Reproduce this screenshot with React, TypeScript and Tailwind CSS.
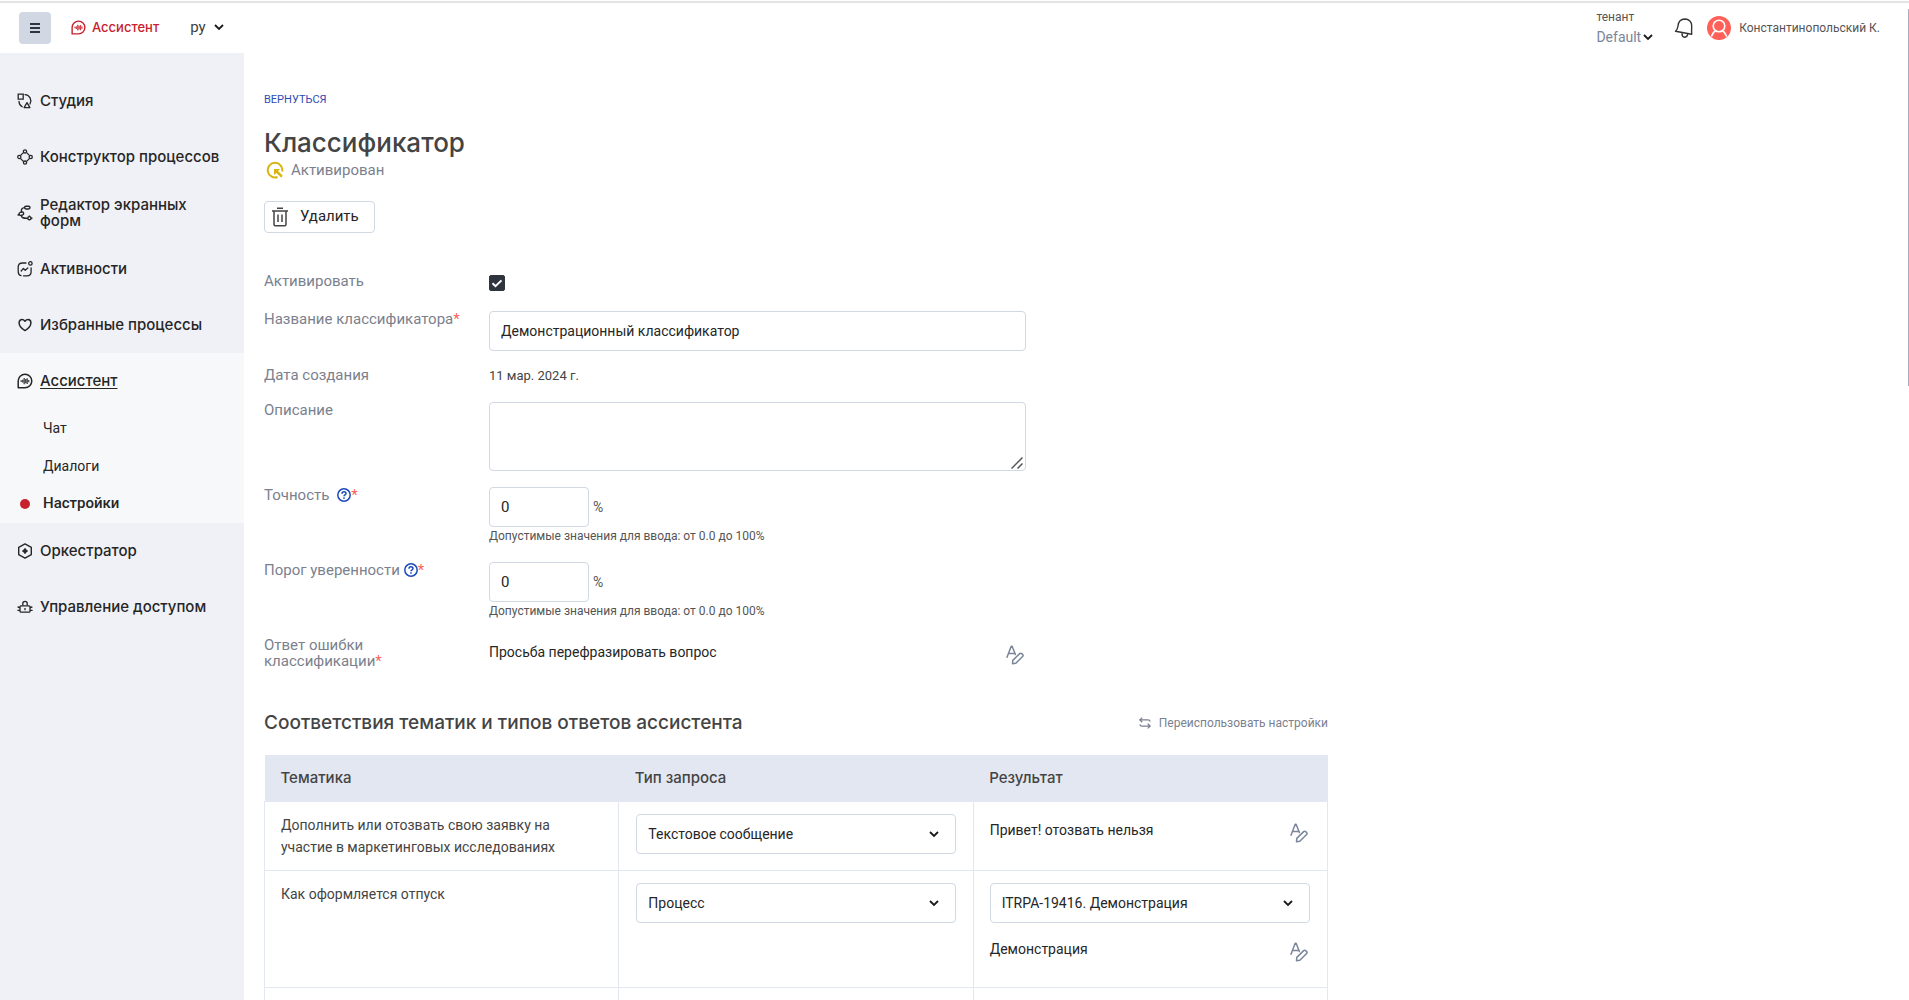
import React, { useState } from "react";
import type { ReactNode } from "react";

/* ---------- Icons ---------- */

type IconProps = { className?: string };

const AssistantIcon = ({ className }: IconProps) => (
  <svg viewBox="0 0 16 16" className={className} fill="none" stroke="currentColor" aria-hidden="true">
    <path d="M1.2 14.8V8a6.8 6.8 0 1 1 6.800 6.800z" strokeWidth="1.500" strokeLinejoin="round" />
    <path d="M4.200 7.300v1.600M5.700 6.700v2.800M7.200 5v6.200M8.700 6v4.200M10.200 5.300v5.600M11.700 7v2.200" strokeWidth="1.300" strokeOpacity="0.850" />
  </svg>
);

const StudioIcon = ({ className }: IconProps) => (
  <svg viewBox="0 0 16 16" className={className} fill="none" stroke="currentColor" strokeWidth="1.3" aria-hidden="true">
    <path d="M1.200 1.200h5v5h-5z" />
    <path d="M8 1.600a6.300 6.300 0 0 1 5 9.400M2 8.400a6.400 6.400 0 0 0 3.200 5.400" strokeLinecap="round" />
    <path d="M10 9.600l2.900 5H7.100z" strokeLinejoin="round" />
  </svg>
);

const BuilderIcon = ({ className }: IconProps) => (
  <svg viewBox="0 0 16 16" className={className} fill="none" stroke="currentColor" strokeWidth="1.3" aria-hidden="true">
    <circle cx="8" cy="2.4" r="1.600" />
    <circle cx="8" cy="13.600" r="1.600" />
    <circle cx="2.300" cy="8" r="1.600" />
    <circle cx="13.700" cy="8" r="1.600" />
    <path d="M6.400 3.600L3.600 6.400M9.600 3.600l2.800 2.800M3.600 9.600l2.800 2.800M12.400 9.600l-2.800 2.800" />
  </svg>
);

const FormsIcon = ({ className }: IconProps) => (
  <svg viewBox="0 0 16 16" className={className} fill="none" stroke="currentColor" strokeWidth="1.400" aria-hidden="true">
    <rect x="7.600" y="1.200" width="5.400" height="2.800" rx="1.400" />
    <rect x="2" y="7.200" width="4.600" height="3" rx="1.500" transform="rotate(-12 4.500 8.400)" />
    <circle cx="12.400" cy="13.200" r="1.600" />
    <path d="M7.600 2.600C5 2.900 4 4.400 4.400 7.200M4.300 10.200c.2 2.400 2 3.400 6.500 3M2.200 9.300L.6 10.400M14 13.200h1.400M12.400 10.600v1" />
  </svg>
);

const ActivityIcon = ({ className }: IconProps) => (
  <svg viewBox="0 0 16 16" className={className} fill="none" stroke="currentColor" strokeWidth="1.3" strokeLinecap="round" aria-hidden="true">
    <path d="M9 2H5.500C2.600 2 1.200 3.200 1.200 6v4.500c0 2.300.8 3.700 2.800 4.100M6.500 14.800h3.500c2.800 0 4.100-1.300 4.100-4.100V7" />
    <circle cx="13.400" cy="2.400" r="1.700" />
    <path d="M4.200 10l2.200-2.600 1.800 1.800L10.800 7" strokeLinejoin="round" />
  </svg>
);

const HeartIcon = ({ className }: IconProps) => (
  <svg viewBox="0 0 16 16" className={className} fill="none" stroke="currentColor" strokeWidth="1.5" strokeLinejoin="round" aria-hidden="true">
    <path d="M8 13.600C5.600 12.300 2.100 9.300 2.100 5.800 2.100 3.700 3.500 2.500 5 2.500c1.300 0 2.300.8 3 1.700.7-.9 1.700-1.700 3-1.700 1.500 0 2.900 1.200 2.900 3.300 0 3.500-3.500 6.500-5.900 7.800z" />
  </svg>
);

const OrchestratorIcon = ({ className }: IconProps) => (
  <svg viewBox="0 0 16 16" className={className} fill="none" stroke="currentColor" aria-hidden="true">
    <path d="M8 .9l6.300 3.500v7.200L8 15.100l-6.300-3.500V4.400z" strokeWidth="1.400" strokeLinejoin="round" />
    <path d="M8 5.300v5.400M5.300 8h5.400" strokeWidth="1.600" />
    <circle cx="8" cy="8" r="2.100" fill="currentColor" stroke="none" />
  </svg>
);

const AccessIcon = ({ className }: IconProps) => (
  <svg viewBox="0 0 16 16" className={className} fill="none" stroke="currentColor" strokeWidth="1.300" aria-hidden="true">
    <rect x="3" y="6.800" width="10" height="6.400" rx="1" />
    <path d="M5.800 6.500V4.600a2.200 2.200 0 0 1 4.400 0v1.900M3 8.500L.6 8M3 11.300H.4M13 8.500l2.400-.5M13 11.300h2.600M8 9v2.200" />
  </svg>
);

const Chevron = ({ className }: IconProps) => (
  <svg viewBox="0 0 10 10" className={className} fill="none" stroke="currentColor" strokeWidth="1.800" aria-hidden="true">
    <path d="M1 3l4 4 4-4" />
  </svg>
);

const BellIcon = ({ className }: IconProps) => (
  <svg viewBox="0 0 20 22" className={className} fill="none" stroke="currentColor" strokeWidth="1.400" strokeLinejoin="round" aria-hidden="true">
    <path d="M1.500 14.300c1.500-1.300 2.200-2.800 2.500-5.300C4.500 4.500 7 2 10.800 2c4.200.1 7 2.700 6.900 6.800-.1 3.300-.2 5.500 0 8.500z" />
    <path d="M8 16.200c-.1 2.200.9 3.700 2.500 4 1.600.2 2.800-.8 3.300-3" />
  </svg>
);

const AvatarIcon = ({ className }: IconProps) => (
  <svg viewBox="0 0 24 24" className={className} fill="none" aria-hidden="true">
    <circle cx="12" cy="12" r="12" fill="#ff6159" />
    <circle cx="12" cy="10" r="5.800" stroke="#fff" strokeWidth="1.600" />
    <path d="M4.300 20.500c.9-3 2.600-4.900 4.900-6.200M19.700 20.500c-.9-3-2.600-4.900-4.900-6.200" stroke="#fff" strokeWidth="1.600" />
  </svg>
);

const StatusIcon = ({ className }: IconProps) => (
  <svg viewBox="0 0 18 18" className={className} fill="none" stroke="currentColor" aria-hidden="true">
    <path d="M11.500 16A7.300 7.300 0 1 1 16.200 10.500" strokeWidth="2" />
    <path d="M8 8h6l-2 2 4.800 4.800-1.600 1.600L10.300 12 8 14z" fill="currentColor" stroke="none" />
  </svg>
);

const TrashIcon = ({ className }: IconProps) => (
  <svg viewBox="0 0 16 20" className={className} fill="none" stroke="currentColor" strokeWidth="1.500" aria-hidden="true">
    <path d="M5 1.300h6M0 4h16M2 4v13.500c0 .8.400 1.200 1.200 1.200h9.600c.8 0 1.200-.4 1.200-1.200V4M6 7.500v7.500M10 7.500v7.500" />
  </svg>
);

const HelpIcon = ({ className }: IconProps) => (
  <svg viewBox="0 0 14 14" className={className} fill="none" stroke="currentColor" strokeWidth="1.500" aria-hidden="true">
    <circle cx="7" cy="7" r="6.200" />
    <path d="M5 5.700c0-1.300.9-2 2-2s2 .7 2 1.800c0 1.400-2 1.500-2 2.800M7 9.300v1.400" />
  </svg>
);

const EditTextIcon = ({ className }: IconProps) => (
  <svg viewBox="0 0 18 20" className={className} fill="none" stroke="currentColor" strokeWidth="1.500" strokeLinecap="round" strokeLinejoin="round" aria-hidden="true">
    <path d="M1 12.200L5.200 1.200h.9l3.300 8.300M2.400 8.600h6.300" />
    <path d="M6.500 18.700l.3-3.300 6.900-6.800c.6-.6 1.400-.6 2 0l.9.900c.6.600.6 1.400 0 2L9.800 18.300z" />
  </svg>
);

const ReuseIcon = ({ className }: IconProps) => (
  <svg viewBox="0 0 12 12" className={className} fill="none" stroke="currentColor" strokeWidth="1.200" aria-hidden="true">
    <path d="M3.300.6L.8 2.900l2.500 2.300M.8 2.900H9c1.300 0 2 .5 2.200 1.700M8.700 6.800l2.500 2.300-2.500 2.300M11.200 9.100H3C1.700 9.100 1 8.600.8 7.400" />
  </svg>
);

/* ---------- Building blocks ---------- */

type NavEntry = { label: string; icon: ReactNode };

const topEntries: NavEntry[] = [
  { label: "Студия", icon: <StudioIcon className="size-4" /> },
  { label: "Конструктор процессов", icon: <BuilderIcon className="size-4" /> },
  { label: "Редактор экранных форм", icon: <FormsIcon className="size-4" /> },
  { label: "Активности", icon: <ActivityIcon className="size-4" /> },
  { label: "Избранные процессы", icon: <HeartIcon className="size-4" /> },
];

const bottomEntries: NavEntry[] = [
  { label: "Оркестратор", icon: <OrchestratorIcon className="size-4" /> },
  { label: "Управление доступом", icon: <AccessIcon className="size-4" /> },
];

function NavLink({ label, icon, active = false }: NavEntry & { active?: boolean }) {
  return (
    <a
      href="#"
      className="flex h-14 items-center gap-[7px] pr-4 pl-[17px] font-['Inter',sans-serif] text-[15px] leading-4 font-medium text-[#262626]"
    >
      <span className="shrink-0">{icon}</span>
      <span className={active ? "underline underline-offset-2" : ""}>{label}</span>
    </a>
  );
}

function Sidebar() {
  return (
    <nav className="w-[244px] shrink-0 bg-[#f0f1f6] pt-5">
      {topEntries.map((e) => (
        <NavLink key={e.label} {...e} />
      ))}
      <div className="bg-[#f7f8fa]">
        <NavLink label="Ассистент" icon={<AssistantIcon className="size-4" />} active />
        <a href="#" className="flex h-[38px] items-center pl-[43px] text-sm">Чат</a>
        <a href="#" className="flex h-[38px] items-center pl-[43px] text-sm">Диалоги</a>
        <a href="#" className="flex h-[38px] items-center gap-[13px] pl-5 text-[15px] font-medium">
          <span className="size-2.5 rounded-full bg-[#c8202c]" />
          Настройки
        </a>
      </div>
      {bottomEntries.map((e) => (
        <NavLink key={e.label} {...e} />
      ))}
    </nav>
  );
}

function Header() {
  return (
    <header className="flex h-[53px] items-center pt-0.5 pr-[29px] pl-[19px]">
      <button aria-label="Меню" className="flex size-8 items-center justify-center rounded bg-[#d1d8e3]">
        <span className="flex w-2.5 flex-col gap-0.5">
          <span className="h-0.5 bg-[#30343f]" />
          <span className="h-0.5 bg-[#30343f]" />
          <span className="h-0.5 bg-[#30343f]" />
        </span>
      </button>
      <a href="#" className="ml-5 flex items-center gap-1.5 font-['Inter',sans-serif] text-[13px] font-medium text-[#c8202c]">
        <AssistantIcon className="size-[15px]" />
        Ассистент
      </a>
      <button className="ml-[31px] flex items-center gap-2 text-[15px] text-[#404040]">
        ру
        <Chevron className="size-2.5 text-[#1a1a1a]" />
      </button>
      <div className="ml-auto flex items-center">
        <button className="mr-[21px] flex flex-col items-start gap-0.5 text-left">
          <span className="text-xs leading-4 text-[#555]">тенант</span>
          <span className="flex items-center gap-0.5 text-sm leading-5 text-[#7b859a]">
            Default
            <Chevron className="size-2.5 text-[#1a1a1a]" />
          </span>
        </button>
        <button aria-label="Уведомления" className="mr-[13px]">
          <BellIcon className="h-[22px] w-5 text-[#333]" />
        </button>
        <AvatarIcon className="mr-2 size-6" />
        <span className="text-xs text-[#555]">Константинопольский К.</span>
      </div>
    </header>
  );
}

const Star = () => <span className="text-[#ff6159]">*</span>;

function Row({ label, id, children, className }: { label: ReactNode; id?: string; children: ReactNode; className: string }) {
  return (
    <div className={`grid grid-cols-[225px_minmax(0,537px)] ${className}`}>
      <label htmlFor={id} className="text-[15px] leading-4 text-[#7b7f8e]">
        {label}
      </label>
      {children}
    </div>
  );
}

function Percent({ id }: { id: string }) {
  return (
    <div>
      <div className="flex items-center gap-1">
        <input id={id} defaultValue="0" className="h-10 w-[100px] rounded border border-[#d1d8e3] px-[11px] text-[15px] text-[#262626]" />
        <span className="text-sm text-[#555]">%</span>
      </div>
      <p className="text-xs leading-[18px] text-[#555]">Допустимые значения для ввода: от 0.0 до 100%</p>
    </div>
  );
}

function Select({ value, label }: { value: string; label: string }) {
  return (
    <div className="relative">
      <select aria-label={label} className="block h-10 w-full appearance-none rounded border border-[#d1d8e3] bg-white px-[11px] text-sm text-[#262626]">
        <option>{value}</option>
      </select>
      <Chevron className="pointer-events-none absolute top-[15px] right-[17px] size-2.5 text-[#1a1a1a]" />
    </div>
  );
}

function EditableText({ text }: { text: string }) {
  return (
    <div className="flex items-start justify-between text-sm text-[#262626]">
      {text}
      <button aria-label="Изменить" className="mt-[3px] mr-0.5">
        <EditTextIcon className="h-5 w-[18px] text-[#7b859a]" />
      </button>
    </div>
  );
}

const th = "px-4 text-left font-['Inter',sans-serif] text-[15px] font-medium";
const td = "border border-[#e3e7f1] align-top";

export default function App() {
  const [active, setActive] = useState(true);
  return (
    <div className="relative flex h-screen flex-col overflow-hidden bg-white font-['Roboto',sans-serif] text-sm text-[#262626]">
      <div className="absolute inset-x-0 top-px h-0.5 bg-[#e1e4e2]" />
      <div className="absolute top-[9px] right-0 h-[377px] w-px bg-[#a5adbf]" />
      <Header />
      <div className="flex min-h-0 flex-1">
        <Sidebar />
        <main className="min-w-0 flex-1 overflow-hidden px-5 pt-[39px]">
          <a href="#" className="block text-[11px] leading-4 text-[#2f4bb3]">ВЕРНУТЬСЯ</a>
          <h1 className="mt-[19px] font-['Inter',sans-serif] text-[26px] leading-8 font-medium text-[#444]">Классификатор</h1>
          <div className="mt-px flex items-center gap-[7px] pl-0.5 text-[15px] leading-5 text-[#7b7f8e]">
            <StatusIcon className="size-[18px] text-[#d9b30f]" />
            Активирован
          </div>
          <button className="mt-[21px] flex h-8 items-center gap-3 rounded border border-[#d1d8e3] pr-[15px] pl-[7px] text-[15px]">
            <TrashIcon className="h-5 w-4 text-[#444]" />
            Удалить
          </button>

          <form className="mt-10">
            <Row label="Активировать" id="active" className="h-[38px]">
              <span className="relative mt-0.5 size-4">
                <input
                  id="active"
                  type="checkbox"
                  checked={active}
                  onChange={(e) => setActive(e.target.checked)}
                  className="block size-4 appearance-none rounded-xs border border-[#30343f] checked:bg-[#30343f]"
                />
                <svg viewBox="0 0 16 16" className="pointer-events-none absolute inset-0 size-4" fill="none" stroke="#fff" strokeWidth="2" aria-hidden="true">
                  <path d="M3.500 8.200l3 3 6-5.800" />
                </svg>
              </span>
            </Row>
            <Row label={<>Название классификатора<Star /></>} id="name" className="h-14">
              <input id="name" defaultValue="Демонстрационный классификатор" className="h-10 rounded border border-[#d1d8e3] px-[11px] text-sm text-[#262626]" />
            </Row>
            <Row label="Дата создания" className="h-[35px]">
              <span className="text-[13px] leading-[18px] text-[#444]">11 мар. 2024 г.</span>
            </Row>
            <Row label="Описание" id="description" className="h-[85px]">
              <span className="relative h-[69px]">
                <textarea id="description" className="block h-[69px] w-full resize-none rounded border border-[#d1d8e3] px-[11px] py-2" />
                <svg viewBox="0 0 12 12" className="pointer-events-none absolute right-[3px] bottom-0.5 size-3" fill="none" stroke="#555" strokeWidth="1.500" aria-hidden="true">
                  <path d="M.5 11.500l11-11M6.500 11.500l5-5" />
                </svg>
              </span>
            </Row>
            <Row label={<span className="flex">Точность <HelpIcon className="mt-px ml-2 size-3.5 text-[#1a4bb8]" /><Star /></span>} id="accuracy" className="h-[75px]">
              <Percent id="accuracy" />
            </Row>
            <Row label={<span className="flex">Порог уверенности <HelpIcon className="mt-px ml-1 size-3.5 text-[#1a4bb8]" /><Star /></span>} id="threshold" className="h-[75px]">
              <Percent id="threshold" />
            </Row>
            <Row label={<>Ответ ошибки<br />классификации<Star /></>} className="">
              <div className="pt-[5px]">
                <EditableText text="Просьба перефразировать вопрос" />
              </div>
            </Row>
          </form>

          <section className="mt-[42px] max-w-[1064px]">
            <div className="flex items-center justify-between">
              <h2 className="font-['Inter',sans-serif] text-[19px] leading-6 font-medium text-[#444]">
                Соответствия тематик и типов ответов ассистента
              </h2>
              <button className="flex items-center gap-2 text-xs text-[#7b7f8e]">
                <ReuseIcon className="size-3" />
                Переиспользовать настройки
              </button>
            </div>
            <table className="mt-5 w-full table-fixed border-collapse text-[#444]">
              <thead className="h-[46px] bg-[#e3e7f1]">
                <tr>
                  <th className={th}>Тематика</th>
                  <th className={th}>Тип запроса</th>
                  <th className={th}>Результат</th>
                </tr>
              </thead>
              <tbody>
                <tr className="h-[69px]">
                  <td className={`${td} px-4 pt-3 leading-[22px]`}>Дополнить или отозвать свою заявку на участие в маркетинговых исследованиях</td>
                  <td className={`${td} px-[17px] pt-3`}>
                    <Select label="Тип запроса" value="Текстовое сообщение" />
                  </td>
                  <td className={`${td} pt-[18px] pr-[17px] pl-4`}>
                    <EditableText text="Привет! отозвать нельзя" />
                  </td>
                </tr>
                <tr className="h-[117px]">
                  <td className={`${td} px-4 pt-3 leading-[22px]`}>Как оформляется отпуск</td>
                  <td className={`${td} px-[17px] pt-3`}>
                    <Select label="Тип запроса" value="Процесс" />
                  </td>
                  <td className={`${td} pt-3 pr-[17px] pl-4`}>
                    <Select label="Результат" value="ITRPA-19416. Демонстрация" />
                    <div className="mt-4">
                      <EditableText text="Демонстрация" />
                    </div>
                  </td>
                </tr>
                <tr className="h-[69px]">
                  <td className={td} />
                  <td className={td} />
                  <td className={td} />
                </tr>
              </tbody>
            </table>
          </section>
        </main>
      </div>
    </div>
  );
}
